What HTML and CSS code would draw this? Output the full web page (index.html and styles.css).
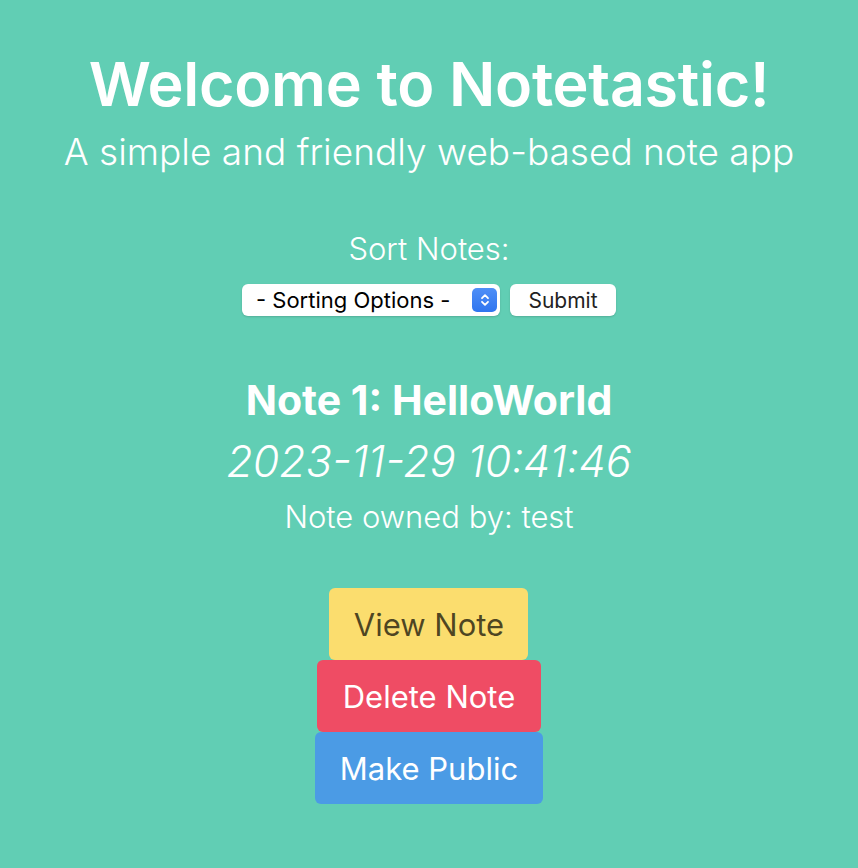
FILE: index.html
```html
<!DOCTYPE html>
<html>
<head>
<meta charset="utf-8">
<link rel="stylesheet" href="styles.css">
</head>
<body>
<main class="page">
  <header class="hero">
    <h1 class="title">Welcome to Notetastic!</h1>
    <p class="subtitle">A simple and friendly web-based note app</p>
  </header>
  <form class="sort">
    <label class="sort-label">Sort Notes:</label>
    <div class="sort-row">
      <div class="select">
        <span class="select-text">- Sorting Options -</span>
        <span class="select-arrow">
          <svg width="12" height="16" viewBox="0 0 12 16"><path d="M3 6.2 L6 3.2 L9 6.2 M3 9.8 L6 12.8 L9 9.8" fill="none" stroke="#fff" stroke-width="1.8" stroke-linecap="round" stroke-linejoin="round"/></svg>
        </span>
      </div>
      <button type="button" class="submit">Submit</button>
    </div>
  </form>
  <section class="note">
    <h2 class="note-title">Note 1: HelloWorld</h2>
    <p class="note-date">2023-11-29 10:41:46</p>
    <p class="note-owner">Note owned by: test</p>
    <div class="actions">
      <button class="btn btn-view">View Note</button>
      <button class="btn btn-delete">Delete Note</button>
      <button class="btn btn-public">Make Public</button>
    </div>
  </section>
</main>
</body>
</html>
```
FILE: styles.css
```css
html, body {
  margin: 0;
  padding: 0;
  background: #61ceb4;
  height: 100%;
}
body {
  font-family: Inter, "Noto Sans", sans-serif;
  color: #fff;
}
.page {
  display: flex;
  flex-direction: column;
  align-items: center;
  text-align: center;
  padding-top: 48px;
}
.hero {
  display: flex;
  flex-direction: column;
  align-items: center;
}
.title {
  margin: 0;
  font-size: 61px;
  font-weight: 600;
  line-height: 72px;
  letter-spacing: -0.3px;
}
.subtitle {
  margin: 10px 0 0;
  font-size: 37px;
  font-weight: 300;
  line-height: 44px;
}
.sort {
  margin-top: 56px;
  display: flex;
  flex-direction: column;
  align-items: center;
}
.sort-label {
  font-size: 31px;
  font-weight: 300;
  line-height: 38px;
}
.sort-row {
  margin-top: 16px;
  display: flex;
  gap: 10px;
}
.select {
  width: 258px;
  height: 32px;
  box-sizing: border-box;
  background: #fff;
  border-radius: 6px;
  box-shadow: 0 1px 2px rgba(0,0,0,0.15);
  display: flex;
  align-items: center;
  justify-content: space-between;
  padding: 0 3px 0 14px;
  color: #000;
  font-size: 22px;
}
.select-arrow {
  width: 25px;
  height: 24px;
  border-radius: 5px;
  background: linear-gradient(#4f8ff7, #2f75ef);
  display: flex;
  align-items: center;
  justify-content: center;
}
.submit {
  width: 106px;
  height: 32px;
  border: none;
  background: #fff;
  border-radius: 6px;
  box-shadow: 0 1px 2px rgba(0,0,0,0.15);
  font-family: inherit;
  font-size: 21px;
  color: #222;
  padding: 0;
}
.note {
  margin-top: 60px;
  display: flex;
  flex-direction: column;
  align-items: center;
}
.note-title {
  margin: 0;
  font-size: 41px;
  font-weight: 700;
  line-height: 48px;
}
.note-date {
  margin: 12px 0 0;
  font-size: 43px;
  font-style: italic;
  font-weight: 300;
  line-height: 50px;
}
.note-owner {
  margin: 12px 0 0;
  font-size: 31px;
  font-weight: 300;
  line-height: 38px;
}
.actions {
  margin-top: 52px;
  display: flex;
  flex-direction: column;
  align-items: center;
}
.btn {
  border: none;
  border-radius: 6px;
  font-family: inherit;
  font-size: 31px;
  font-weight: 400;
  height: 72px;
  padding: 0;
  color: #fff;
}
.btn-view {
  background: #fbdd6e;
  color: rgba(0,0,0,0.7);
  width: 199px;
}
.btn-delete {
  background: #ef4c64;
  width: 224px;
}
.btn-public {
  background: #4b9be5;
  width: 228px;
}
```
